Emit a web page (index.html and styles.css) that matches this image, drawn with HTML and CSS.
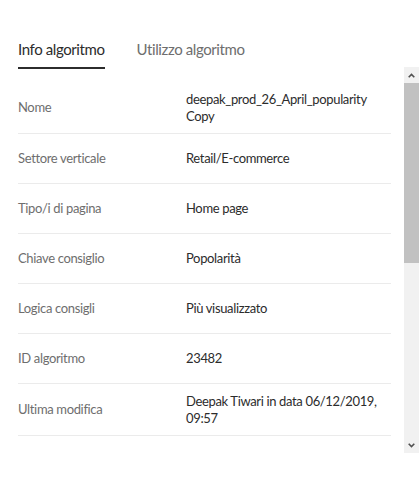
FILE: index.html
```html
<!DOCTYPE html>
<html lang="it">
<head>
<meta charset="utf-8">
<title>Info algoritmo</title>
<link rel="stylesheet" href="styles.css">
</head>
<body>
<div class="panel">
  <div class="tabs">
    <div class="tab active">Info algoritmo</div>
    <div class="tab">Utilizzo algoritmo</div>
  </div>
  <div class="scrollbox">
    <div class="content">
      <div class="row"><div class="label">Nome</div><div class="value">deepak_prod_26_April_popularity Copy</div></div>
      <div class="row"><div class="label">Settore verticale</div><div class="value">Retail/E-commerce</div></div>
      <div class="row"><div class="label">Tipo/i di pagina</div><div class="value">Home page</div></div>
      <div class="row"><div class="label">Chiave consiglio</div><div class="value">Popolarità</div></div>
      <div class="row"><div class="label">Logica consigli</div><div class="value">Più visualizzato</div></div>
      <div class="row"><div class="label">ID algoritmo</div><div class="value">23482</div></div>
      <div class="row"><div class="label">Ultima modifica</div><div class="value">Deepak Tiwari in data 06/12/2019, 09:57</div></div>
    </div>
    <div class="scrollbar">
      <div class="sb-btn">
        <svg width="7" height="5" viewBox="0 0 7 5"><path d="M0.7 4.3 L3.5 1.5 L6.3 4.3" fill="none" stroke="#505050" stroke-width="1.6"/></svg>
      </div>
      <div class="sb-track">
        <div class="sb-thumb"></div>
      </div>
      <div class="sb-btn">
        <svg width="7" height="5" viewBox="0 0 7 5"><path d="M0.7 0.7 L3.5 3.5 L6.3 0.7" fill="none" stroke="#505050" stroke-width="1.6"/></svg>
      </div>
    </div>
  </div>
</div>
</body>
</html>
```

FILE: styles.css
```css
html, body {
  margin: 0;
  padding: 0;
  background: #ffffff;
}
body {
  font-family: Lato, "Open Sans", "Liberation Sans", sans-serif;
  color: #2c2c2c;
}
.panel {
  width: 419px;
  height: 496px;
  display: flex;
  flex-direction: column;
}
.tabs {
  display: flex;
  gap: 32px;
  padding: 39px 0 0 18px;
  margin-bottom: -2px;
}
.tab {
  font-size: 15px;
  letter-spacing: -0.4px;
  line-height: 20px;
  padding-bottom: 8px;
  color: #6e6e6e;
  border-bottom: 2px solid transparent;
}
.tab.active {
  color: #2c2c2c;
  border-bottom-color: #2c2c2c;
}
.scrollbox {
  height: 386px;
  display: flex;
}
.content {
  flex: 1;
  overflow: hidden;
  padding-top: 15px;
}
.row {
  display: flex;
  align-items: center;
  box-sizing: border-box;
  min-height: 50px;
  padding: 8.5px 0;
  margin: 0 13px 0 18px;
  border-bottom: 1px solid #ebebeb;
  font-size: 13px;
  letter-spacing: -0.35px;
  line-height: 17px;
}
.label {
  width: 168px;
  flex: none;
  color: #6e6e6e;
}
.value {
  flex: 1;
  color: #2c2c2c;
}
.scrollbar {
  width: 15px;
  flex: none;
  display: flex;
  flex-direction: column;
  background: #f1f1f1;
}
.sb-btn {
  height: 16px;
  flex: none;
  display: flex;
  align-items: center;
  justify-content: center;
}
.sb-track {
  flex: 1;
  display: flex;
  flex-direction: column;
}
.sb-thumb {
  height: 180px;
  background: #c1c1c1;
}
```
